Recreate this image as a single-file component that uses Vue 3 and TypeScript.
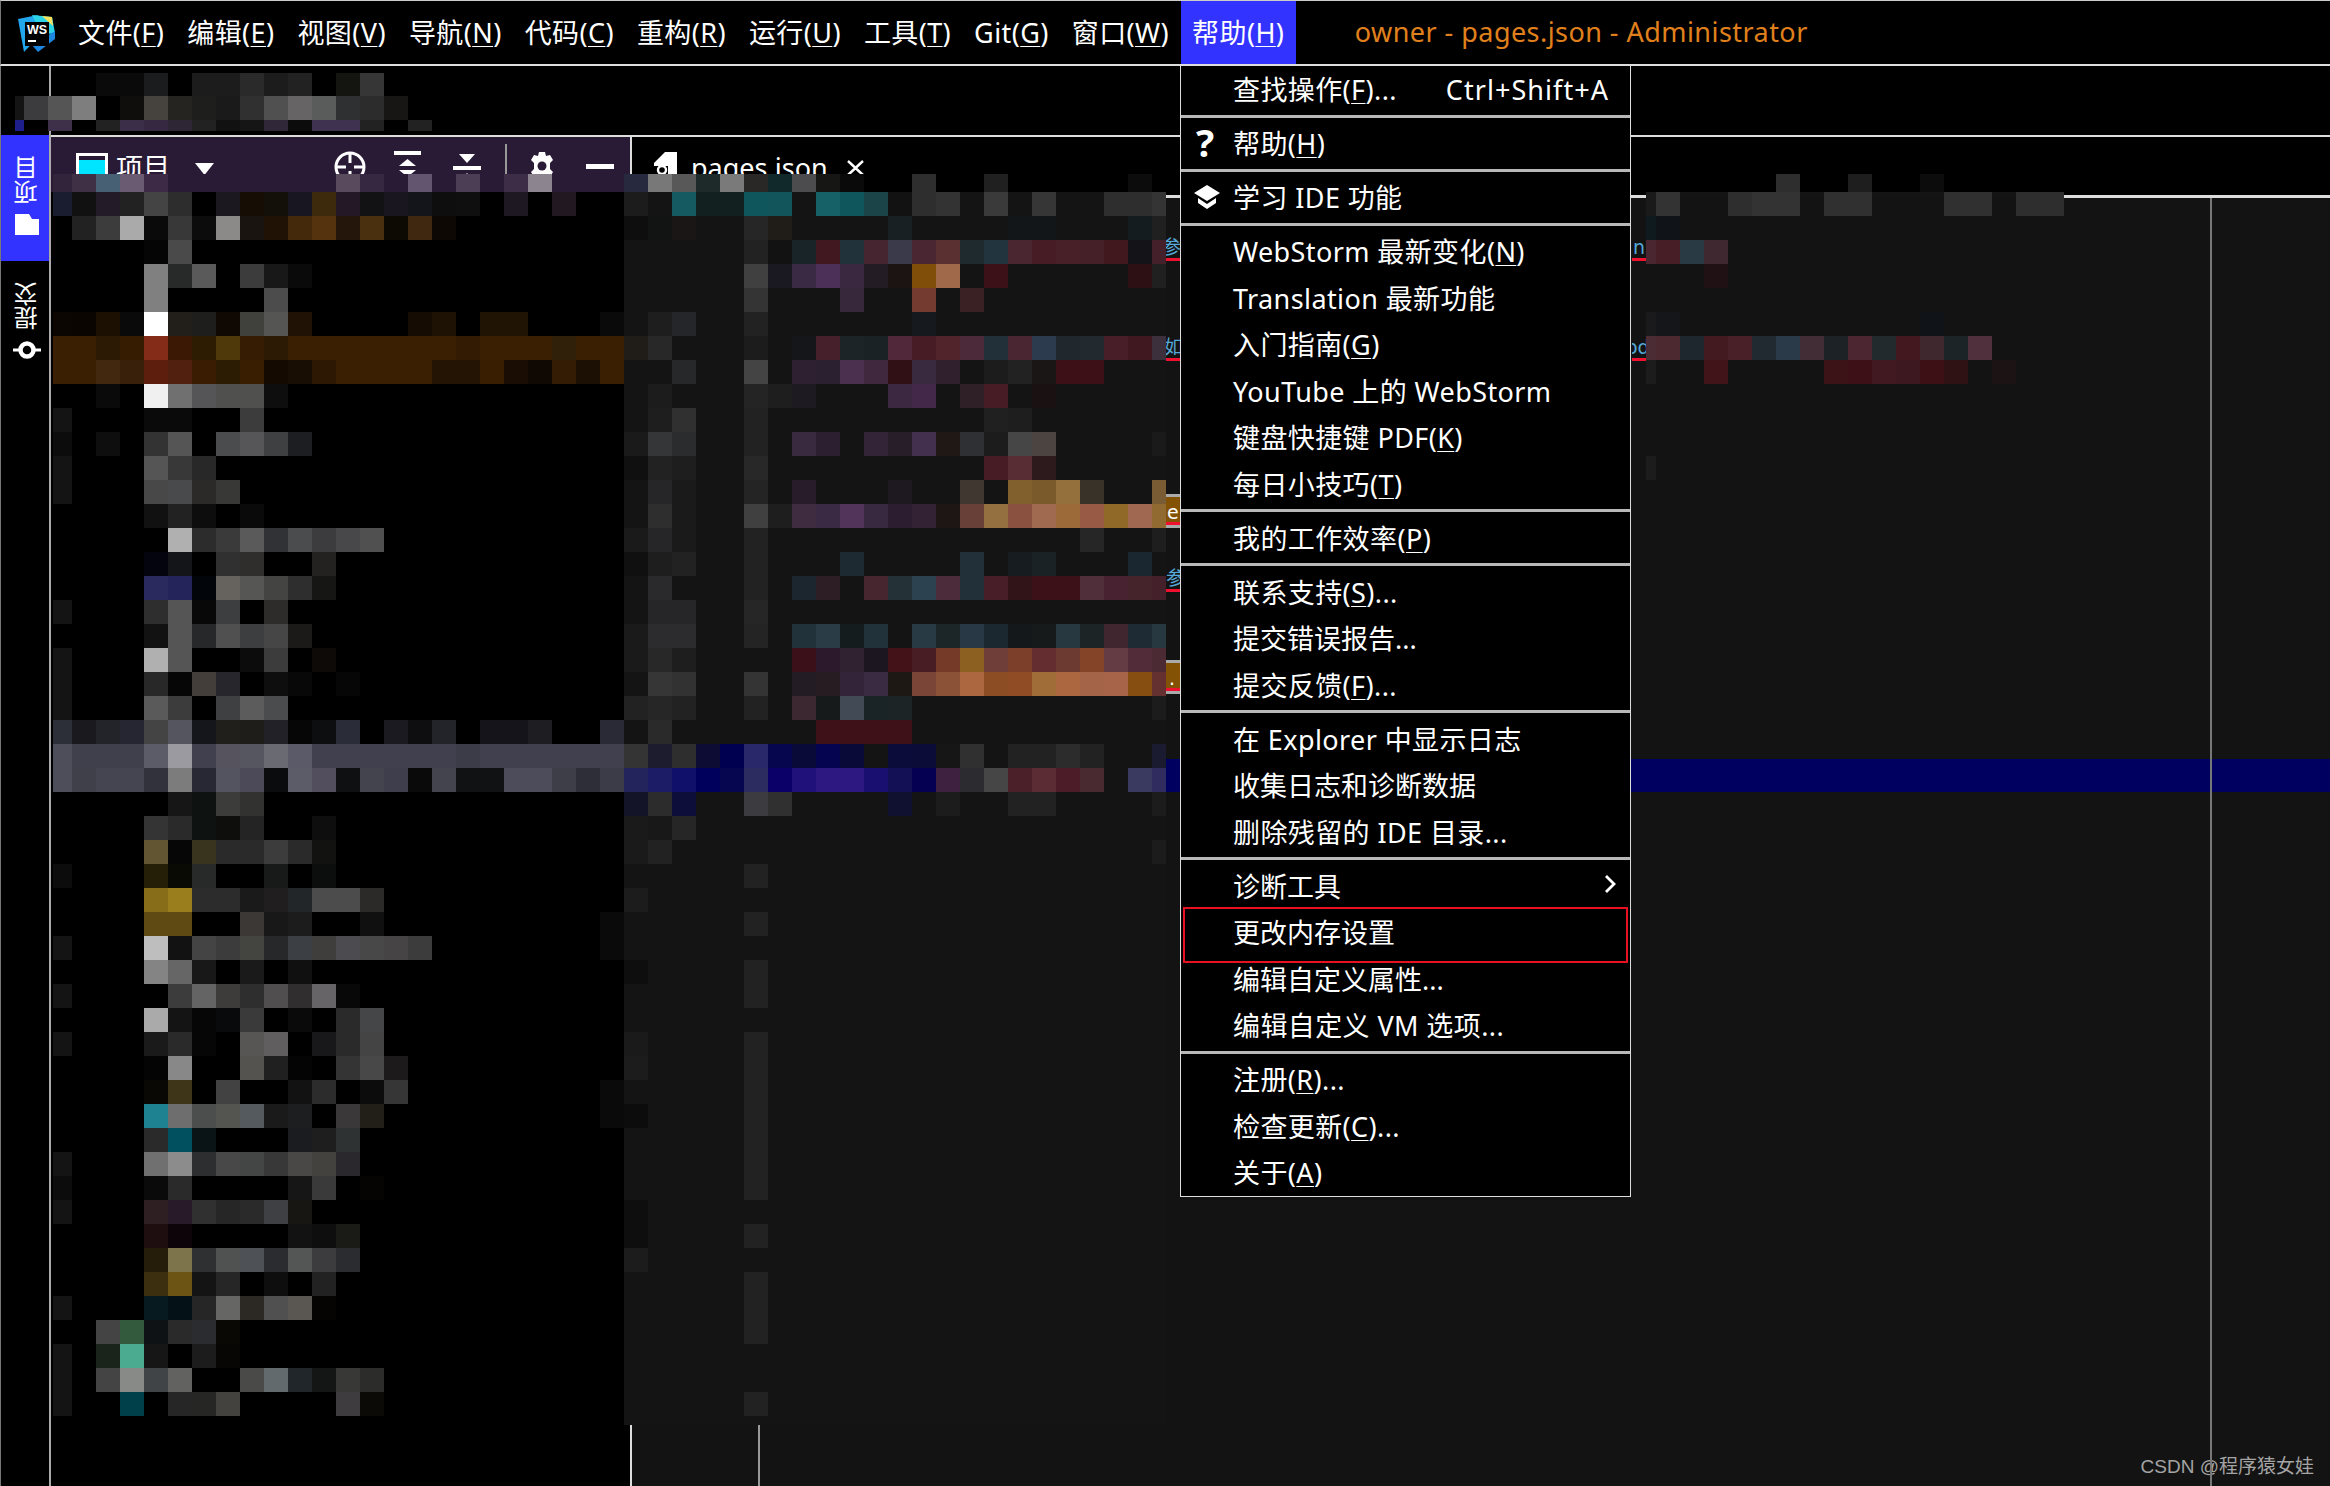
<script setup lang="ts">
interface MenuItem { t: string; m?: string; a?: string; k?: string; icon?: string; arrow?: boolean; boxed?: boolean }
interface Cell { x: number; y: number; w: number; h: number; c: string }

const menus = [
  ['文件(', 'F', ')'], ['编辑(', 'E', ')'], ['视图(', 'V', ')'], ['导航(', 'N', ')'], ['代码(', 'C', ')'], ['重构(', 'R', ')'],
  ['运行(', 'U', ')'], ['工具(', 'T', ')'], ['Git(', 'G', ')'], ['窗口(', 'W', ')'], ['帮助(', 'H', ')'],
]

const groups: MenuItem[][] = [
  [{ t: '查找操作(', m: 'F', a: ')...', k: 'Ctrl+Shift+A' }],
  [{ t: '帮助(', m: 'H', a: ')', icon: 'help' }],
  [{ t: '学习 IDE 功能', icon: 'learn' }],
  [
    { t: 'WebStorm 最新变化(', m: 'N', a: ')' }, { t: 'Translation 最新功能' }, { t: '入门指南(', m: 'G', a: ')' },
    { t: 'YouTube 上的 WebStorm' }, { t: '键盘快捷键 PDF(', m: 'K', a: ')' }, { t: '每日小技巧(', m: 'T', a: ')' },
  ],
  [{ t: '我的工作效率(', m: 'P', a: ')' }],
  [{ t: '联系支持(', m: 'S', a: ')...' }, { t: '提交错误报告...' }, { t: '提交反馈(', m: 'F', a: ')...' }],
  [{ t: '在 Explorer 中显示日志' }, { t: '收集日志和诊断数据' }, { t: '删除残留的 IDE 目录...' }],
  [{ t: '诊断工具', arrow: true }, { t: '更改内存设置', boxed: true }, { t: '编辑自定义属性...' }, { t: '编辑自定义 VM 选项...' }],
  [{ t: '注册(', m: 'R', a: ')...' }, { t: '检查更新(', m: 'C', a: ')...' }, { t: '关于(', m: 'A', a: ')' }],
]

const isMixed = (it: MenuItem): boolean => /[A-Za-z(]/.test(it.t)

const fragments = [
  { cls: 'frag-blue', x: 1166, y: 236, h: 22, text: '参考', ind: -4 },
  { cls: 'frag-blue', x: 1166, y: 336, h: 22, text: '如果', ind: -2 },
  { cls: 'frag-warn', x: 1166, y: 497, h: 25, text: 'e', ind: 1 },
  { cls: 'frag-blue', x: 1166, y: 567, h: 22, text: '参', ind: 0 },
  { cls: 'frag-warn', x: 1166, y: 663, h: 25, text: '.', ind: 3 },
  { cls: 'frag-blue', x: 1632, y: 236, h: 22, text: 'n', ind: 1 },
  { cls: 'frag-blue', x: 1632, y: 336, h: 22, text: 'od', ind: -6 },
]

// Pixelated redaction: one string per 24px row, starting at y = 192. "col:rgb" or "from-to:rgb"; x = 48 + 24 * col.
const grid: string[] = [
  '0:1a1c30 1:111111 2:231c28 3:222222 4:444444 5:2d2d2d 7:1b1820 8:160e04 9:13100a 10:181620 11:3d2a0c 12:241826 13:121214 14:1a1620 15:14151a 16:0e0e0e 17:0f0f0f 19:1e1822 21:211822 24:1c1c1c 26:155a60 27-28:122020 29:0e565c 30:12565c 32:166068 33:0e565c 34:1a4448 35:121212 36:2e2e2e 37:333333 39:3a3a3a 41:363636 44-45:2e2e2e 46:343434 66:1a1a1a 67:333333 70:2e2e2e 71-72:333333 74-75:303030 79-80:303030 82-83:2e2e2e',
  '1:222222 2:3c3c3c 3:aaaaaa 4:0a0a0a 5:383838 6:0c0c0c 7:8c8a88 8:191410 9:201305 10:442a0a 11:54330e 12:24160a 13:4a300e 14:0d0a04 15:402810 16:0d0804 24:0e0e0e 25:121414 26:1a1616 29:262626 30:201c18 35:182024 40-41:121618 45:141c20 46:202020 66:0e1a1e 67:101418',
  '4:050505 5:4a4a4a 29:222222 30:121212 31:182428 32:421820 33:22323a 34:462430 35:3a3a4a 36:4a2632 37:5a3030 38:1e2a2e 39:22343e 40:4a2630 41:481c24 42:482028 43:462028 44:40181e 45:141418 46:44202a 66:4a2630 67:481e26 68:2a3a44 69:402830',
  '4:808080 5:282a2a 6:5a5a5a 8:3c3c3c 9:181818 10:0a0a0a 29:404040 30:1a1820 31:3a2a44 32:4c3058 33:3a2840 34:241c24 35:1c1412 36:804e08 37:a06a4a 39:3c1218 45:2c1014 46:202020 69:201214',
  '4:808080 9:4c4c4c 29:343434 33:38283c 36:743c30 38:3a2224',
  '0:0c0602 1:0b0502 2:1c1002 3:0a0a0a 4:ffffff 5:221e1a 6:1e1e1c 7:100802 8:40403c 9:555553 10:201204 15:150c03 16:1e1204 18-19:201404 23:0a0a0a 25:1e1e1e 26:24262a 29:222222 36:161a1e 66:1a1a1c 67:14161a 78:101418',
  '0-1:3a1f02 2:2c1a04 3:361d02 4:842c18 5:3a1804 6:2e1c02 7:4f390a 8:351c02 9:2c1a04 10-16:3a1f02 17:331a02 18-20:3a1f02 21:30200a 22-23:3a1f02 24:201c18 25:282828 29:1c1c1c 31:14161a 32:46202a 33:1c2428 34:1a2226 35:50283a 36:481c24 37:50242a 38:4c2a3a 39:22303a 40:4a2632 41:2c3c4e 42:20282e 43:222a30 44:481e28 45:401820 46:3c303c 66:4c2c34 67:4c2830 68:1e262e 69:421a20 70:4a2028 71:202a30 72:2a3a48 73:422c36 74:1c2226 75:4c2630 76:222a2e 77:44181f 78:40282f 79:1c2428 80:50303c',
  '0-1:3a1f02 2:41280e 3:38200a 4:5e1e0e 5:52200e 6:3a1c02 7:2c1c04 8:3a1e02 9:140a02 10:180e04 11:2c1803 12-15:3a1f02 16-17:241404 18:3a1e02 19:1a0e04 20:100802 21:341c04 22:1c1004 23:3a1f02 26:26282a 29:444444 31:2e2030 32:2a2030 33:4c3050 34:40283e 35:301014 36:3a2a40 37:30202e 39:1c1c1c 40:222222 41:1a1616 42-43:3c1016 66:1c1c1c 69:401418 74:3c1418 75:3c1016 76:401a20 77:3e1820 78:3c1015 79:2e1214 81:1c1414',
  '2:0a0a0a 4:f0f0f0 5:707070 6:555558 7-8:50504e 9:0e0e0e 25:1c1c1c 29:242424 30:1e1e1e 31:1e1a22 35:3c2840 36:44284a 38:2e2026 39:481c24 41:1a1212',
  '0:141414 4-5:0a0a0a 8:3c3c3c 25:1e1e1e 26:303030 29:222222 39:202020 40:1e1e1e',
  '0:0c0c0c 2:0e0e0e 4:333333 5:555555 7:4a4c4e 8:565658 9:3e4042 10:1c1e22 24:1a1a1a 25:343638 26:2a2c2e 29:222222 31:3a2a40 32:2c2030 34:342438 35:281e2a 36:42304e 37:201814 38:2e3034 39:1c1c1c 40:464646 41:4c4440 46:1a1a1a',
  '0:141414 4:555555 5:383838 6:282828 24:101010 25:222222 26:1e1e1e 29:282828 39:481c24 40:582e34 41:2c1a1c 66:1c1c1c',
  '0:141414 4:484848 5:484a4c 6:2c2a28 7:383836 25:262628 26:1a1a1a 29:242424 31:281c2a 35:1e1820 38:403830 40:82602e 41:7a5a2a 42:94703c 43:383228 46:7a5c34',
  '4:111111 5:222222 6:0d0d0d 8:0a0a0a 25:2e2e2e 26:1a1a1a 29:404040 30:1e1e1e 31:402c40 32:3a2a44 33:52345a 34:382840 35:2c1e30 36:322234 37:1e1614 38:684038 39:947040 40:8a5040 41:a06a50 42:9c6a38 43:985a44 44:906828 45:a06850 46:906a30',
  '5:b0b0b0 6:2c2c2c 7:3a3a3a 8:5a5a5a 9:303236 10:4a4c4e 11:3c3c3e 12:48484a 13:505050 24:1a1a1a 25:262628 26:1a1a1a 29:222222 43:262626 46:1e1e1e',
  '4:04040e 5:141518 7:303030 8:302e2c 11:242220 24:101010 25:1e1e1e 26:222222 29:222222 33:1e2a32 38:22303a 40:161c20 41:1a2226 45:1a2630',
  '4:2a2a5e 5:24245a 6:02060a 7:66625e 8:565654 9:444442 10:2e2e2e 11:161614 25:2a2a2c 29:222222 31:1c262e 32:2c1e24 34:482630 35:243238 36:2c4250 37:4c2c3a 38:22303a 39:481e28 40:301418 41-42:3c1218 43:502e3a 44:482230 45:46242c 46:44202a',
  '0:141414 4:2e2e2e 5:555555 6:080808 7:3c3e40 9:2e2c2a 25-26:262628 29:262626',
  '4:121212 5:555555 6:26282a 7:505050 8:3c3e40 9:464646 10:1c1a18 24:1a1a1a 25-26:2c2c2e 29:242424 31:22323a 32:2a3c46 33:141c1e 34:22323a 36:283a44 37:1c2628 38:283844 39:1c2830 40:14181a 41:161a1a 42:283840 43:1c2426 44:40262e 45:1e2a34 46:283840',
  '0:141414 4:b0b0b0 5:555555 8:0c0c0c 9:3c3c3c 11:0e0a08 24:1a1a1a 25:282828 26:1e1e1e 31:3c1018 32:2c1a2c 33:302230 34:1c1620 35:421218 36:481e24 37:763a28 38:8c6020 39:703e38 40:7c402a 41:642e30 42:6c3a30 43:844428 44:643c44 45:522c38 46:4c2a34',
  '0:141414 4:282828 5:060606 6:443e3a 7:26262c 9:0e0e0e 10:080808 12:060606 25:363636 26:323232 29:343434 31:241c24 32:261c22 33:34243a 34:3a2a42 35:1e1814 36:7a4436 37:8c5238 38:ac6640 39:8c4c24 40:904c24 41:a06c38 42:ac6640 43:a46448 44:a86448 45:864e10 46:643030',
  '0:141414 4:5a5a5a 5:3c3c3c 7:3e4042 8:5c5c5c 9:4a4c4e 24:222222 25:262626 26:222222 29:222222 31:3c2830 32:161a1a 33:424a56 34:1a2426 35:1c2426 46:1c1c1c',
  '0:2c2e38 1:1a1a1e 2:22242a 3:252632 4:444444 5:555560 6:15151c 7:201f1c 8:1e1d19 9:222128 10:060606 11:0c0e10 12:2a2c38 14:1a1a20 15:0e0e10 16:22242a 18-19:14141a 20:1e1e22 23:2a2a36 25:2a2a2a 32-35:3e1018',
  '0:4e4e5a 1-3:40404c 4:5c5c68 5:9a9aa0 6:40404e 7:56525e 8:565660 9:6a6a72 10:5a5a68 11-16:40404e 17:3c3c48 18-23:40404e 24:343434 25:1c1c2e 26:2e2e2e 27:0c0c34 28:000050 29:28286a 30:06064e 31:0a0a38 32:040450 33:0a0a38 35:0c0c3a 36:0c0c38 37:161616 38:303030 40-41:222222 42:2c2c2c 43:222222 46:1a1a30',
  '0:4e4e5a 1:40404a 2-3:454552 4:32323c 5:7c7c7c 6:282834 7:545460 8:4c4a58 9:0a0c0e 10:5c5c68 11:524e5e 12:0e1012 13:44444e 14:3e3e4c 15:0a0a0a 16:44444e 17-18:101214 19-20:4c4c5a 21:3e3e48 22:2e2e38 23:3c3c48 24:24245c 25:1c1c66 26:10106a 27:00005c 28:060650 29:2c2c60 30:0a0068 31:20107a 32-33:2c1880 34:180f70 35:141055 36:060052 37:3e2040 38:2c2c30 39:464646 40:4c2028 41:5c2c34 42:4c1c28 43:482a30 45:3a3a60 46:302c60',
  '5:161616 6:0e1210 7:3c3c3a 8:323230 24:141428 25:2c2c2c 26:0e0e3a 29:3c3c40 30:303030 35:101030 37:1c1c1c 40-41:222222 46:1c1c1c',
  '4:343434 5:2a2a2a 6:0e1210 7:0e0e0c 8:242424 11:0e0e0e 24:1a1a1a 25:181818 26:262626',
  '4:625632 5:060606 6:38341e 7-8:2a2a2a 9:3c3c3c 10:2a2a2a 11:121210 24:1a1a1a 25:222222 46:1c1c1c',
  '0:0c0c0c 4:261f08 5:0a0a04 6:282a2a 9:181a1a 11:0c0e0e 29:222222',
  '4:876d1a 5:9a7d1c 6-7:2c2c2c 8:1a1a1a 9:201e1e 10:222628 11-12:4c4c4c 13:2c2a28 24:1c1c1c',
  '4-5:5e4a12 8:3c3836 9:181818 10:1c1c1c 13:101010 23:0a0a0a 29:222222',
  '0:141414 4:bebebe 5:121212 6:444444 7:3c3c3c 8:444440 9:26282a 10:3c4044 11:403e3c 12:4c4c50 13:484848 14:464444 15:3c3c3c 23:0a0a0a',
  '4:848484 5:666666 6:181818 8:1a1a1a 10:101010 24:0e0e0e 29:222222',
  '0:141414 5:3c3c3c 6:646464 7:3e3c3a 8:2e2e2e 9:504e4e 10:302e2e 11:666466 12:080808 29:222222',
  '4:aaaaaa 5:141414 6:060606 7:080a0c 8:3a3a3a 10:0a0a0a 12:2a2a2a 13:444648',
  '0:141414 4:1a1a1a 5:2a2a2a 6:060606 8:585654 9:605e5e 11:18181a 12:2a2a2a 13:444444 24:1a1a1a 29:222222',
  '4:040404 5:888888 8:555350 9:202020 10:040404 12:343434 13:484848 14:1c1a1a 24:1c1c1c 29:222222',
  '4:0a0804 5:3e3418 7:424242 10:121212 11:2c2c2c 13:0c0c0c 14:363636 23:0a0a0a 29:222222',
  '4:1e8290 5:6e6e6e 6:4c4e4e 7:545450 8:545a5e 9:1a1a1a 10:1c1e20 12:3a3838 13:221e18 23:0a0a0a 24:0c0c0c 29:222222',
  '4:2a2a2a 5:005060 6:0a1416 10:1a1c20 11:1e1e1e 12:2e3232 29:222222',
  '0:141414 4:707070 5:8c8c8c 6:2c2e30 7:484848 8:444646 9:383838 10:4a4846 11:44423e 12:2a282c 29:222222',
  '0:0c0c0c 4:0a0a0a 5:2a2a2a 10:161616 11:3a3a3a 13:060402 29:222222',
  '0:141414 4:2e2022 5:281a28 6:303030 7:262626 8:2a2a2a 9:3e4044 10:181612 24:0e0e0e',
  '4:1e0e10 5:0c0408 10:121212 11:0e0e0e 12:1a1a16 24:0e0e0e 29:222222',
  '4:261c0a 5:7e744c 6:2e3032 7:505252 8:4e5256 9:2a2c30 10:545656 11:3c3c3e 12:2a2c30 24:1c1c1c',
  '4:3c2f10 5:6c5414 6:141414 7:262626 9:0e0e0e 11:222222 29:222222',
  '0:141414 4:061a20 5:041218 6:262626 7:666664 8:2c2824 9:505050 10:5a5652 11:060402 29:222222',
  '2:444444 3:345a3e 4:0e1214 5:2a2a2a 6:2a2c30 7:0a0804 29:222222',
  '0:141414 2:1a241a 3:4aab90 4:161616 6:1c1c1c 7:080604',
  '0:141414 2:444444 3:888a88 4:404446 5:626260 8:4a4a48 9:626a6e 10:20262a 11:141616 12:383836 13:2c2c2a',
  '0:141414 3:00404a 5:262626 6:262624 7:44423e 12:3e3c3e 13:0c0a06 29:222222',
]

// The partial row that starts at y = 174.
const topRow = '0:32243a 1:3f3045 2:476074 3:6a5a72 4:3d2a46 12:5a4a5e 13:362840 15:635570 17:4c3f55 19:3d2d46 20:8c8590 24:272a3e 25:787878 26:585858 27:1e2a2a 28:7a7a7a 29:2a2826 30:12292c 31:4c4c4e 32:161614 33:0a0a0a 36:2e2e2e 39:202020 45:0c0c0c 72:2e2e2e 75:1e1e1e 78:0c0c0c'

// Blurred path strip under the toolbar, on a grid of x = 24 * col.
const pathRows: [number, number, string][] = [
  [73, 23, '4-5:0a0a0a 6:1a1c1e 8-9:1c1c1c 10:2a2a2a 11:1c1c1c 12:222222 14:141410 15:363636'],
  [96, 24, '0:141414 1:3c3c3e 2:555555 3:7e7e7e 5:100e0c 6:46423e 7:262420 8:1e1e1c 9:1a1a1a 10:303030 11:505050 12:666464 13:5a5c5c 14:2e3032 15:2c2c2c 16:181614'],
  [120, 11, '0:1e1e8c 2:3e3048 4:222222 5:3a2e48 6:362840 7:2e2634 8:222222 9:111111 10:151515 11:302838 12:0c0c0c 13-14:3e3250 15:222222 17:222222'],
]

function tokens(s: string): { from: number; to: number; c: string }[] {
  return s.split(' ').map((tok) => {
    const [range, c] = tok.split(':')
    const [a, b] = range.split('-').map(Number)
    return { from: a, to: b ?? a, c: '#' + c }
  })
}

function buildCells(): Cell[] {
  const out: Cell[] = [
    { x: 51, y: 174, w: 573, h: 18, c: '#291a36' },
    { x: 624, y: 174, w: 542, h: 18, c: '#000000' },
    { x: 1646, y: 174, w: 418, h: 18, c: '#000000' },
    { x: 624, y: 192, w: 542, h: 1233, c: '#141414' },
    { x: 1646, y: 192, w: 418, h: 6, c: '#141414' },
    { x: 51, y: 192, w: 573, h: 1233, c: '#000000' },
  ]
  const push = (y: number, h: number, s: string) => {
    for (const t of tokens(s)) {
      for (let k = t.from; k <= t.to; k++) {
        let x = 48 + 24 * k
        let w = 24
        if (k === 0) { x = 53; w = 19 }
        if (k === 46) w = 14
        if (k === 66) { x = 1646; w = 10 }
        out.push({ x, y, w, h, c: t.c })
      }
    }
  }
  push(174, 18, topRow)
  grid.forEach((s, r) => push(192 + 24 * r, 24, s))
  for (const [y, h, s] of pathRows) {
    for (const t of tokens(s)) {
      for (let k = t.from; k <= t.to; k++) {
        out.push(k === 0 ? { x: 15, y, w: 9, h, c: t.c } : { x: 24 * k, y, w: 24, h, c: t.c })
      }
    }
  }
  return out
}

const cells = buildCells()
</script>

<template>
  <div class="app">
    <header class="menubar">
      <svg class="logo" width="38" height="38" viewBox="0 0 38 38">
        <polygon points="0,4 20,0 24,18 6,37" fill="#22a6ee" />
        <polygon points="14,0 34,2 37,18 24,20" fill="#2bd4e6" />
        <polygon points="24,1 34,2 35,11" fill="#f4e25c" />
        <polygon points="20,37 37,24 37,16 14,30" fill="#1c86e0" />
        <rect x="7" y="7" width="24" height="24" fill="#000" />
        <text x="9" y="19" class="logo-text">WS</text>
        <rect x="10" y="25" width="8" height="2" fill="#fff" />
      </svg>
      <nav class="menus">
        <span v-for="(m, i) in menus" :key="i" class="menu" :class="{ active: i === menus.length - 1 }">{{ m[0] }}<u>{{ m[1] }}</u>{{ m[2] }}</span>
      </nav>
      <span class="title">owner - pages.json - Administrator</span>
    </header>

    <div class="workspace">
      <aside class="strip">
        <div class="strip-tab selected">
          <span class="vtext">项目</span>
          <svg width="26" height="21" viewBox="0 0 26 21"><path d="M1 0h14l3 5h7v16H1z" fill="#fff" /></svg>
        </div>
        <div class="strip-tab">
          <span class="vtext">提交</span>
          <svg width="28" height="20" viewBox="0 0 28 20"><circle cx="14" cy="10" r="6.5" fill="none" stroke="#fff" stroke-width="4.5" /><path d="M0 10h6M22 10h6" stroke="#fff" stroke-width="3" /></svg>
        </div>
      </aside>

      <main class="content">
        <div class="toolbar"></div>
        <div class="panels">
          <section class="project">
            <div class="project-head">
              <svg class="ic-window" width="32" height="30" viewBox="0 0 32 30"><rect x="1.5" y="1.5" width="29" height="28" fill="#00e5ff" stroke="#fff" stroke-width="3" /><rect x="3" y="3" width="26" height="4" fill="#291a36" /></svg>
              <span class="head-label">项目</span>
              <svg class="ic-drop" width="19" height="12" viewBox="0 0 19 12"><polygon points="0,0 19,0 9.5,12" fill="#fff" /></svg>
              <svg class="ic-target" width="32" height="32" viewBox="0 0 32 32"><circle cx="16" cy="16" r="14" fill="none" stroke="#fff" stroke-width="3" /><path d="M16 3v9M16 20v9M3 16h9M20 16h9" stroke="#fff" stroke-width="3" /></svg>
              <svg class="ic-expand" width="27" height="30" viewBox="0 0 27 30"><rect width="27" height="4" fill="#fff" /><polygon points="13.5,8 22,15 5,15" fill="#fff" /><polygon points="13.5,26 22,19 5,19" fill="#fff" /></svg>
              <svg class="ic-collapse" width="28" height="30" viewBox="0 0 28 30"><polygon points="14,10 22,1 6,1" fill="#fff" /><rect y="13" width="28" height="4" fill="#fff" /><polygon points="14,20 22,29 6,29" fill="#fff" /></svg>
              <i class="head-sep"></i>
              <svg class="ic-gear" width="28" height="28" viewBox="0 0 28 28"><path d="M11 0h6l1 4 4-1 3 5-3 3v6l3 3-3 5-4-1-1 4h-6l-1-4-4 1-3-5 3-3v-6L3 8l3-5 4 1z" fill="#fff" /><circle cx="14" cy="14" r="4.5" fill="#291a36" /></svg>
              <i class="ic-minus"></i>
            </div>
          </section>
          <section class="editor">
            <div class="tabs">
              <svg class="ic-file" width="24" height="24" viewBox="0 0 24 24"><path d="M11 0h12v24H0V11z" fill="#fff" /><path d="M0 14h14v10H0z" fill="#000" /><circle cx="8" cy="18" r="4" fill="none" stroke="#fff" stroke-width="2.4" /></svg>
              <span class="tab-name">pages.json</span>
              <svg class="ic-close" width="17" height="16" viewBox="0 0 17 16"><path d="M1 1l15 14M16 1L1 15" stroke="#fff" stroke-width="2.4" /></svg>
            </div>
            <div class="code">
              <i class="gutter-line"></i>
              <i class="margin-line"></i>
              <div class="caret-row"></div>
            </div>
          </section>
        </div>
      </main>
    </div>

    <svg class="mosaic" width="2330" height="1486" shape-rendering="crispEdges">
      <rect v-for="(c, i) in cells" :key="i" :x="c.x" :y="c.y" :width="c.w" :height="c.h" :fill="c.c" />
    </svg>

    <div
      v-for="(f, i) in fragments"
      :key="i"
      class="frag"
      :class="f.cls"
      :style="{ left: f.x + 'px', top: f.y + 'px', height: f.h + 'px', textIndent: f.ind + 'px' }"
    >{{ f.text }}</div>

    <div class="popup">
      <template v-for="(g, gi) in groups" :key="gi">
        <i v-if="gi > 0" class="sep"></i>
        <div class="group" :class="{ first: gi === 0, last: gi === groups.length - 1 }">
          <div v-for="(it, ii) in g" :key="ii" class="item" :class="{ boxed: it.boxed }">
            <span v-if="it.icon === 'help'" class="item-icon help">?</span>
            <svg v-else-if="it.icon === 'learn'" class="item-icon" width="26" height="24" viewBox="0 0 26 24"><polygon points="13,0 26,8 13,16 0,8" fill="#fff" /><path d="M4 13v5l9 6 9-6v-5l-9 6z" fill="#fff" /></svg>
            <span class="label" :class="{ mixed: isMixed(it) }">{{ it.t }}<u v-if="it.m">{{ it.m }}</u>{{ it.a }}</span>
            <span v-if="it.k" class="shortcut">{{ it.k }}</span>
            <svg v-if="it.arrow" class="chev" width="12" height="20" viewBox="0 0 12 20"><path d="M2 2l8 8-8 8" fill="none" stroke="#fff" stroke-width="2.8" /></svg>
          </div>
        </div>
      </template>
    </div>

    <div class="mark">CSDN @程序猿女娃</div>
  </div>
</template>

<style scoped>
.app {
  position: relative;
  width: 2330px;
  height: 1486px;
  overflow: hidden;
  display: flex;
  flex-direction: column;
  background: #000;
  color: #fff;
  font-family: "Noto Sans", "Noto Sans CJK SC", sans-serif;
  font-size: 27px;
}
u {
  text-decoration-thickness: 1px;
  text-underline-offset: 3px;
}
.menubar {
  box-sizing: border-box;
  height: 66px;
  flex: none;
  display: flex;
  align-items: stretch;
  border-top: 1px solid #ccc;
  border-bottom: 2px solid #ddd;
  border-left: 1px solid #777;
  padding-left: 17px;
}
.logo {
  margin-top: 14px;
  flex: none;
}
.logo-text {
  font-family: "Liberation Sans", sans-serif;
  font-weight: 700;
  font-size: 12.5px;
  fill: #fff;
}
.menus {
  display: flex;
  margin-left: 10.5px;
}
.menu {
  padding: 0 11.5px;
  line-height: 63px;
  letter-spacing: 0.4px;
  white-space: nowrap;
}
.menu.active {
  background: #3333ff;
}
.title {
  margin-left: 59px;
  line-height: 61px;
  letter-spacing: 0.45px;
  color: #e0801c;
  white-space: nowrap;
}
.workspace {
  flex: 1;
  display: flex;
  min-height: 0;
}
.strip {
  box-sizing: border-box;
  width: 51px;
  flex: none;
  padding-top: 69px;
  border-left: 1px solid #777;
  border-right: 2px solid #aaa;
}
.strip-tab {
  box-sizing: border-box;
  width: 48px;
  display: flex;
  flex-direction: column;
  align-items: center;
  gap: 10px;
  font-size: 24px;
  line-height: 1;
  margin-bottom: 20px;
  padding: 21px 0 0 4px;
}
.strip-tab.selected {
  height: 126px;
  background: #3333ff;
  margin-bottom: 0;
}
.vtext {
  writing-mode: vertical-rl;
  transform: rotate(180deg);
}
.content {
  flex: 1;
  min-width: 0;
  display: flex;
  flex-direction: column;
}
.toolbar {
  height: 69px;
  flex: none;
  border-bottom: 2px solid #ddd;
}
.panels {
  flex: 1;
  display: flex;
  min-height: 0;
}
.project {
  width: 579px;
  flex: none;
}
.project-head {
  height: 55px;
  overflow: hidden;
  background: #291a36;
  display: flex;
  position: relative;
  align-items: flex-start;
  padding-left: 25px;
}
.ic-window { margin-top: 16px; flex: none; }
.head-label { margin-left: 8px; line-height: 62px; flex: none; }
.ic-drop { margin-left: 25px; margin-top: 26px; flex: none; }
.ic-target { margin-left: 120px; margin-top: 14px; flex: none; }
.ic-expand { margin-left: 28px; margin-top: 14px; flex: none; }
.ic-collapse { margin-left: 32px; margin-top: 16px; flex: none; }
.head-sep { margin-left: 24px; margin-top: 7px; width: 2px; height: 40px; background: #999; flex: none; }
.ic-gear { margin-left: 21px; margin-top: 15px; flex: none; }
.ic-minus { margin-left: 30px; margin-top: 27px; width: 28px; height: 5px; background: #fff; flex: none; }
.editor {
  flex: 1;
  min-width: 0;
  display: flex;
  flex-direction: column;
  border-left: 2px solid #ddd;
}
.tabs {
  box-sizing: border-box;
  height: 61px;
  flex: none;
  border-bottom: 3px solid #ddd;
  display: flex;
  align-items: flex-start;
  padding-left: 22px;
}
.ic-file { margin-top: 15px; flex: none; }
.tab-name { margin-left: 13px; line-height: 62px; white-space: nowrap; }
.ic-close { margin-left: 19px; margin-top: 23px; flex: none; }
.code {
  flex: 1;
  position: relative;
  background: #131313;
  padding-top: 561px;
}
.caret-row {
  height: 33px;
  background: #000060;
}
.gutter-line {
  position: absolute;
  left: 126px;
  top: 0;
  bottom: 0;
  width: 2px;
  background: #999;
}
.margin-line {
  position: absolute;
  left: 1578px;
  top: 0;
  bottom: 0;
  width: 2px;
  background: #777;
  z-index: 1;
}
.mosaic {
  position: absolute;
  left: 0;
  top: 0;
  pointer-events: none;
}
.frag {
  position: absolute;
  width: 14px;
  overflow: hidden;
  white-space: nowrap;
  font-family: "DejaVu Sans", "Noto Sans CJK SC", sans-serif;
  font-size: 19px;
  line-height: 22px;
  border-bottom: 3px solid #f01030;
}
.frag-blue { color: #56a8d8; }
.frag-warn {
  background: #845204;
  color: #fff;
  line-height: 30px;
  box-shadow: 0 -3px 0 #aaa, 0 3px 0 #aaa;
}
.popup {
  position: absolute;
  left: 1180px;
  top: 65px;
  width: 451px;
  box-sizing: border-box;
  border: 1px solid #ddd;
  background: #000;
}
.group {
  padding: 2.25px 0;
}
.group.first { padding-top: 0; }
.group.last { padding-bottom: 0; }
.sep {
  display: block;
  height: 3px;
  background: #b8b8b8;
}
.item {
  position: relative;
  box-sizing: border-box;
  height: 46.5px;
  line-height: 45.5px;
  padding: 1px 20px 0 52px;
  display: flex;
  justify-content: space-between;
  align-items: center;
  white-space: nowrap;
}
.label.mixed { letter-spacing: 0.4px; }
.item.boxed::after {
  content: "";
  position: absolute;
  left: 2px;
  right: 2px;
  top: -2px;
  bottom: -7px;
  border: 2.5px solid #e81123;
}
.item-icon {
  position: absolute;
  left: 13px;
  top: 11px;
}
.item-icon.help {
  left: 15px;
  top: 0;
  font-size: 38px;
  font-weight: 700;
}
.shortcut { margin-right: 1px; letter-spacing: 1.05px; }
.chev { margin-right: -6px; margin-bottom: 5px; }
.mark {
  position: absolute;
  right: 16px;
  top: 1456px;
  font-family: "Liberation Sans", "Noto Sans CJK SC", sans-serif;
  font-size: 19px;
  line-height: 22px;
  color: #a4a4a4;
}
</style>

<style>
html, body {
  margin: 0;
  background: #000;
}
</style>
